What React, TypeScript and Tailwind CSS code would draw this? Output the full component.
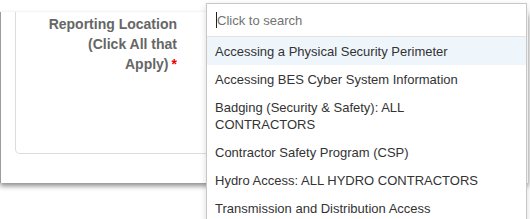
import React from 'react';

const options = [
  'Accessing a Physical Security Perimeter',
  'Accessing BES Cyber System Information',
  'Badging (Security & Safety): ALL CONTRACTORS',
  'Contractor Safety Program (CSP)',
  'Hydro Access: ALL HYDRO CONTRACTORS',
  'Transmission and Distribution Access',
  'Vegetation Management',
];

export default function App() {
  return (
    <div className="relative w-[530px] h-[219px] overflow-hidden bg-white font-['Liberation_Sans',Arial,sans-serif]">
      {/* outer panel */}
      <div className="mt-[12px] w-[528px] h-[171px] bg-white border-l border-[#9c9c9c] shadow-[0_3px_5px_rgba(0,0,0,0.45)]">
        <div className="ml-[14px] w-[500px] h-[142px] border-x border-b border-[#dcdcdc] rounded-b-[5px]">
          <label className="block ml-[29px] w-[132px] pt-[2px] text-right text-[14px] leading-[20px] font-bold text-[#666]">
            Reporting Location (Click All that Apply)
            <span className="ml-[3px] text-[#e00]">*</span>
          </label>
        </div>
      </div>

      {/* dropdown */}
      <div className="absolute left-[206px] top-[3px] w-[321px] h-[240px] bg-white border border-[#c8c8c8] shadow-[0_2px_6px_rgba(0,0,0,0.15)]">
        <div className="relative h-[33px] border-b border-[#e2e2e2] flex items-center">
          <input
            type="text"
            placeholder="Click to search"
            className="w-full h-full pl-[10px] pr-2 text-[13px] text-[#333] placeholder:text-[#727272] outline-none bg-transparent"
          />
          <span className="absolute left-[9px] top-[8px] w-px h-[16px] bg-[#222]" />
        </div>
        <ul className="text-[13px] leading-[17px] text-[#333]">
          {options.map((o, i) => (
            <li
              key={o}
              className={
                i === 0
                  ? 'pl-[8px] pr-[30px] pt-[6px] pb-[5px] bg-[#eef6fc]'
                  : 'pl-[8px] pr-[30px] pt-[6px] pb-[5px]'
              }
            >
              {o}
            </li>
          ))}
        </ul>
      </div>
    </div>
  );
}
